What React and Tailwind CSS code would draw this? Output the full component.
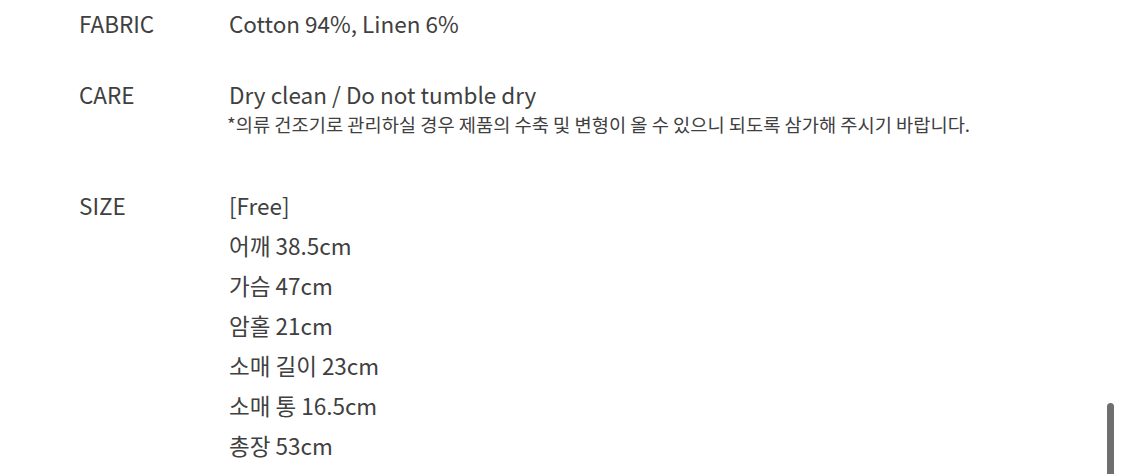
export default function App() {
  const font = { fontFamily: '"Noto Sans CJK KR", "Noto Sans", sans-serif' };
  const sizes = ["[Free]", "어깨 38.5cm", "가슴 47cm", "암홀 21cm", "소매 길이 23cm", "소매 통 16.5cm", "총장 53cm"];
  return (
    <div className="relative w-[1125px] h-[474px] overflow-hidden bg-white text-[#404040]" style={font}>
      <div className="flex flex-col pl-[79px] pt-[9px]">
        <div className="flex h-[30px] items-center">
          <div className="w-[150px] text-[22.5px]">FABRIC</div>
          <div className="text-[22.5px]">Cotton 94%, Linen 6%</div>
        </div>
        <div className="flex mt-[41px]">
          <div className="w-[150px] text-[22.5px] h-[30px] flex items-center">CARE</div>
          <div className="flex flex-col">
            <div className="text-[22.5px] h-[30px] flex items-center">Dry clean / Do not tumble dry</div>
            <div className="text-[18.7px] h-[28px] flex items-center -ml-[2px]">*의류 건조기로 관리하실 경우 제품의 수축 및 변형이 올 수 있으니 되도록 삼가해 주시기 바랍니다.</div>
          </div>
        </div>
        <div className="flex mt-[53px]">
          <div className="w-[150px] text-[22.5px] h-[30px] flex items-center">SIZE</div>
          <div className="flex flex-col gap-[10px]">
            {sizes.map((s) => (
              <div key={s} className="text-[22.5px] h-[30px] flex items-center">{s}</div>
            ))}
          </div>
        </div>
      </div>
      <div className="absolute left-[1107px] top-[403px] w-[7px] h-[80px] rounded-full bg-[#6f6f6f]" />
    </div>
  );
}
